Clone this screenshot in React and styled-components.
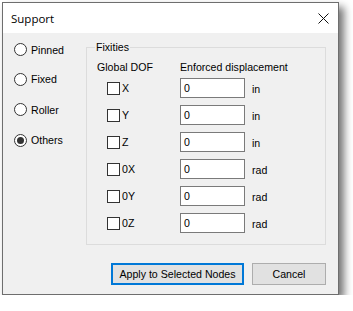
import React from "react";
import styled, { createGlobalStyle } from "styled-components";

const GlobalStyle = createGlobalStyle`
  html, body {
    margin: 0;
    padding: 0;
    background: #ffffff;
  }
  body {
    font-family: "Liberation Sans", Arial, sans-serif;
    font-size: 10.6px;
    color: #000;
  }
`;

const Page = styled.div`
  padding: 2px 0 0 2px;
`;

const Window = styled.div`
  width: 337px;
  box-sizing: border-box;
  border: 1px solid #6e6e6e;
  background: #f0f0f0;
  box-shadow: 5px 5px 8px rgba(0, 0, 0, 0.55);
`;

const TitleBar = styled.div`
  height: 30px;
  background: #ffffff;
  display: flex;
  align-items: center;
  justify-content: space-between;
  padding: 0 9px 0 8px;
`;

const Title = styled.span`
  font-family: "Open Sans", "Noto Sans", sans-serif;
  font-size: 11.5px;
  color: #000;
`;

const Body = styled.div`
  height: 261px;
  box-sizing: border-box;
  padding: 0 12px 9px 0;
  display: flex;
  flex-direction: column;
`;

const Main = styled.div`
  display: flex;
  align-items: flex-start;
`;

const RadioColumn = styled.div`
  width: 83px;
  box-sizing: border-box;
  padding: 2px 0 0 11px;
  display: flex;
  flex-direction: column;
`;

const RadioRow = styled.label`
  height: ${(p) => p.h}px;
  display: flex;
  align-items: center;
  gap: 4px;
`;

const RadioDot = styled.span`
  width: 13px;
  height: 13px;
  box-sizing: border-box;
  border-radius: 50%;
  border: 1px solid #333;
  background: #fff;
  display: flex;
  align-items: center;
  justify-content: center;
  &::after {
    content: "";
    width: 7px;
    height: 7px;
    border-radius: 50%;
    background: ${(p) => (p.checked ? "#333" : "transparent")};
  }
`;

const Group = styled.div`
  position: relative;
  margin-top: 14px;
  width: 240px;
  height: 198px;
  box-sizing: border-box;
  border: 1px solid #dcdcdc;
  padding: 13px 0 0 0;
`;

const Legend = styled.span`
  position: absolute;
  left: 8px;
  top: -7px;
  padding: 0 1px;
  background: #f0f0f0;
  line-height: 13px;
`;

const HeaderRow = styled.div`
  display: grid;
  grid-template-columns: 83px auto;
  padding-left: 10px;
  line-height: 13px;
  margin-bottom: 4px;
`;

const Rows = styled.div`
  display: flex;
  flex-direction: column;
  gap: 7px;
`;

const DofRow = styled.div`
  display: grid;
  grid-template-columns: 73px 65px auto;
  align-items: center;
  height: 20px;
  padding-left: 20px;
`;

const CheckLabel = styled.label`
  display: flex;
  align-items: center;
  gap: 2px;
`;

const CheckBox = styled.span`
  width: 13px;
  height: 13px;
  box-sizing: border-box;
  border: 1px solid #333;
  background: #fff;
`;

const Input = styled.div`
  height: 20px;
  box-sizing: border-box;
  border: 1px solid #7a7a7a;
  background: #fff;
  padding-left: 3px;
  display: flex;
  align-items: center;
`;

const Unit = styled.span`
  margin-left: 7px;
  padding-top: 2px;
`;

const Footer = styled.div`
  margin-top: auto;
  display: flex;
  justify-content: flex-end;
  gap: 8px;
`;

const Button = styled.button`
  height: 22px;
  width: ${(p) => p.width}px;
  box-sizing: border-box;
  background: #e1e1e1;
  border: ${(p) => (p.primary ? "2px solid #0078d7" : "1px solid #adadad")};
  font-family: "Liberation Sans", Arial, sans-serif;
  font-size: 10.6px;
  color: #000;
  padding: 0;
`;

const supports = [
  { name: "Pinned", h: 29 },
  { name: "Fixed", h: 30 },
  { name: "Roller", h: 31 },
  { name: "Others", h: 30 },
];

const dofs = [
  { name: "X", unit: "in" },
  { name: "Y", unit: "in" },
  { name: "Z", unit: "in" },
  { name: "0X", unit: "rad" },
  { name: "0Y", unit: "rad" },
  { name: "0Z", unit: "rad" },
];

const CloseIcon = () => (
  <svg width="11" height="11" viewBox="0 0 11 11">
    <path d="M0.5 0.5 L10.5 10.5 M10.5 0.5 L0.5 10.5" stroke="#111" strokeWidth="1" fill="none" />
  </svg>
);

const App = () => {
  return (
    <Page>
      <GlobalStyle />
      <Window>
        <TitleBar>
          <Title>Support</Title>
          <CloseIcon />
        </TitleBar>
        <Body>
          <Main>
            <RadioColumn>
              {supports.map((s) => (
                <RadioRow key={s.name} h={s.h}>
                  <RadioDot checked={s.name === "Others"} />
                  {s.name}
                </RadioRow>
              ))}
            </RadioColumn>
            <Group>
              <Legend>Fixities</Legend>
              <HeaderRow>
                <span>Global DOF</span>
                <span>Enforced displacement</span>
              </HeaderRow>
              <Rows>
                {dofs.map((d) => (
                  <DofRow key={d.name}>
                    <CheckLabel>
                      <CheckBox />
                      {d.name}
                    </CheckLabel>
                    <Input>0</Input>
                    <Unit>{d.unit}</Unit>
                  </DofRow>
                ))}
              </Rows>
            </Group>
          </Main>
          <Footer>
            <Button primary width={133}>Apply to Selected Nodes</Button>
            <Button width={74}>Cancel</Button>
          </Footer>
        </Body>
      </Window>
    </Page>
  );
};

export default App;
